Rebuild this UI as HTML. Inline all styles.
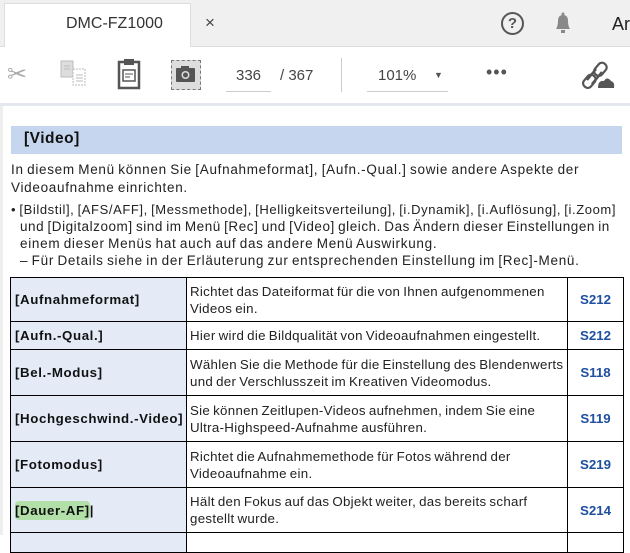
<!DOCTYPE html><html><head><style>
body{margin:0;width:630px;height:535px;overflow:hidden;background:#fff;font-family:"Liberation Sans",sans-serif;position:relative}
.a{position:absolute}
.t{font-size:13.5px;color:#222;white-space:nowrap;letter-spacing:0.7px;word-spacing:-1px}
table{table-layout:fixed}
td{border:1px solid #000;font-size:13.3px;color:#222;padding:0 3px;vertical-align:middle;line-height:17px;letter-spacing:0.3px;word-spacing:-1px;white-space:nowrap;overflow:hidden}
td.l{background:#e4ebf6;font-weight:bold;color:#111;letter-spacing:0.6px;padding-left:4px}
td.p{color:#1f4fa0;font-weight:bold;text-align:center;letter-spacing:0}
</style></head><body>
<div class="a" style="left:0;top:0;width:630px;height:46px;background:#f0f0f0;border-bottom:1px solid #ddd"></div>
<div class="a" style="left:4px;top:3px;width:185px;height:44px;background:#fff;border:1px solid #ddd;border-bottom:none"></div>
<div class="a" style="left:66px;top:15px;font-size:16px;color:#333">DMC-FZ1000</div>
<div class="a" style="left:205px;top:13px;font-size:17px;color:#444">×</div>
<div class="a" style="left:501px;top:12px;width:19px;height:19px;border:2px solid #555;border-radius:50%;text-align:center;font-size:15px;font-weight:bold;color:#555;line-height:19px">?</div>
<svg class="a" style="left:552px;top:11px" width="22" height="26"><path d="M4 18 Q6 15 6 10 Q6 4 11 4 Q16 4 16 10 Q16 15 18 18 Z" fill="#888"/><circle cx="11" cy="3" r="1.5" fill="#888"/><rect x="9" y="19" width="4" height="3" fill="#888"/></svg>
<div class="a" style="left:612px;top:14px;font-size:18px;color:#222">Ar</div>
<div class="a" style="left:0;top:47px;width:630px;height:56px;background:#fff"></div>
<div class="a" style="left:7px;top:60px;font-size:24px;color:#aaa">✂</div>
<svg class="a" style="left:60px;top:60px" width="32" height="28"><rect x="1" y="1" width="12" height="16" fill="#ddd" stroke="#bbb"/><rect x="13" y="9" width="12" height="16" fill="#fff" stroke="#bbb" stroke-dasharray="2 1"/><path d="M16 15h7M16 18h7M16 21h7M4 6h6M4 9h6" stroke="#bbb"/></svg>
<svg class="a" style="left:117px;top:58px" width="26" height="32"><rect x="2" y="4" width="20" height="26" fill="#fff" stroke="#555" stroke-width="2.5"/><rect x="7" y="1" width="10" height="6" fill="#555"/><rect x="6" y="12" width="12" height="11" fill="none" stroke="#555" stroke-width="1.5"/><path d="M8 16h8M8 19h5" stroke="#555"/></svg>
<div class="a" style="left:171px;top:60px;width:28px;height:28px;background:#ddd;border:1px dashed #777"></div>
<svg class="a" style="left:175px;top:65px" width="22" height="18"><rect x="1" y="3" width="19" height="14" rx="1" fill="#555"/><rect x="6" y="1" width="8" height="3" fill="#555"/><circle cx="10.5" cy="10" r="4" fill="#ddd"/><circle cx="10.5" cy="10" r="2.5" fill="#555"/></svg>
<div class="a" style="left:236px;top:67px;font-size:15px;color:#444">336</div>
<div class="a" style="left:226px;top:91px;width:45px;height:1px;background:#ccc"></div>
<div class="a" style="left:280px;top:67px;font-size:15px;color:#444">/ 367</div>
<div class="a" style="left:341px;top:58px;width:1px;height:34px;background:#ccc"></div>
<div class="a" style="left:378px;top:67px;font-size:15px;color:#444">101%</div>
<div class="a" style="left:434px;top:70px;font-size:9px;color:#555">▼</div>
<div class="a" style="left:367px;top:91px;width:81px;height:1px;background:#ccc"></div>
<div class="a" style="left:486px;top:62px;font-size:18px;color:#555;letter-spacing:1px">•••</div>
<svg class="a" style="left:582px;top:60px" width="34" height="30"><path d="M5 20 L14 9 M10 24 L20 12" stroke="#555" stroke-width="2.5" fill="none"/><rect x="3" y="14" width="9" height="14" rx="4" transform="rotate(40 7 21)" fill="none" stroke="#555" stroke-width="2.2"/><rect x="14" y="2" width="9" height="14" rx="4" transform="rotate(40 18 9)" fill="none" stroke="#555" stroke-width="2.2"/><path d="M16 28 Q16 20 22 21 Q25 16 29 21 Q33 22 32 28 Z" fill="#555"/></svg>
<div class="a" style="left:0;top:103px;width:630px;height:3px;background:#e4e8ee"></div>
<div class="a" style="left:0;top:106px;width:3px;height:429px;background:#eee"></div>
<div class="a" style="left:11px;top:126px;width:611px;height:28px;background:#c7d6ef"></div>
<div class="a" style="left:24px;top:130px;font-size:15.5px;font-weight:bold;color:#111;letter-spacing:0.5px">[Video]</div>
<div class="a t" style="left:11px;top:162px">In diesem Menü können Sie [Aufnahmeformat], [Aufn.-Qual.] sowie andere Aspekte der</div>
<div class="a t" style="left:11px;top:180px">Videoaufnahme einrichten.</div>
<div class="a t" style="left:11px;top:202px;font-size:13px;letter-spacing:0.6px">• [Bildstil], [AFS/AFF], [Messmethode], [Helligkeitsverteilung], [i.Dynamik], [i.Auflösung], [i.Zoom]</div>
<div class="a t" style="left:20px;top:219px;letter-spacing:0.55px">und [Digitalzoom] sind im Menü [Rec] und [Video] gleich. Das Ändern dieser Einstellungen in</div>
<div class="a t" style="left:20px;top:236px">einem dieser Menüs hat auch auf das andere Menü Auswirkung.</div>
<div class="a t" style="left:20px;top:253px">– Für Details siehe in der Erläuterung zur entsprechenden Einstellung im [Rec]-Menü.</div>
<table class="a" style="left:10px;top:277px;border-collapse:collapse;width:613px">
<col style="width:176px"><col style="width:381px"><col style="width:56px">
<tr style="height:44px"><td class="l">[Aufnahmeformat]</td><td>Richtet das Dateiformat für die von Ihnen aufgenommenen<br>Videos ein.</td><td class="p">S212</td></tr>
<tr style="height:28px"><td class="l">[Aufn.-Qual.]</td><td>Hier wird die Bildqualität von Videoaufnahmen eingestellt.</td><td class="p">S212</td></tr>
<tr style="height:46px"><td class="l">[Bel.-Modus]</td><td>Wählen Sie die Methode für die Einstellung des Blendenwerts<br>und der Verschlusszeit im Kreativen Videomodus.</td><td class="p">S118</td></tr>
<tr style="height:46px"><td class="l">[Hochgeschwind.-Video]</td><td>Sie können Zeitlupen-Videos aufnehmen, indem Sie eine<br>Ultra-Highspeed-Aufnahme ausführen.</td><td class="p">S119</td></tr>
<tr style="height:46px"><td class="l">[Fotomodus]</td><td>Richtet die Aufnahmemethode für Fotos während der<br>Videoaufnahme ein.</td><td class="p">S219</td></tr>
<tr style="height:45px"><td class="l"><span style="background:#b3e0a8;border-radius:4px;padding:2px 0">[Dauer-AF]</span>|</td><td>Hält den Fokus auf das Objekt weiter, das bereits scharf<br>gestellt wurde.</td><td class="p">S214</td></tr>
<tr style="height:20px"><td class="l"></td><td></td><td></td></tr>
</table>
</body></html>
